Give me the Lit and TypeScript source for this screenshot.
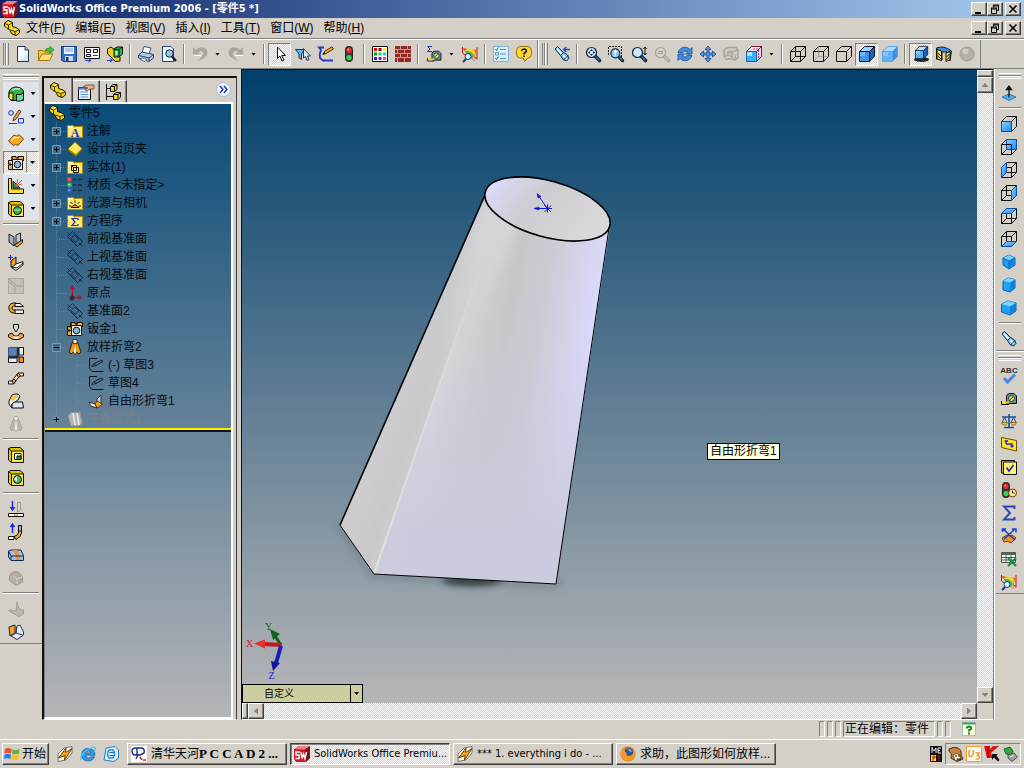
import { LitElement, html, svg, css, nothing } from "lit";
import { customElement, property } from "lit/decorators.js";
import { classMap } from "lit/directives/class-map.js";

/* ---------- icon drawings, 16 x 16 units ---------- */

const faces: Record<string, string> = {
  front: "0.5,5.5 10.5,5.5 10.5,15.5 0.5,15.5",
  back: "5.5,0.5 15.5,0.5 15.5,10.5 5.5,10.5",
  left: "0.5,5.5 5.5,0.5 5.5,10.5 0.5,15.5",
  right: "10.5,5.5 15.5,0.5 15.5,10.5 10.5,15.5",
  top: "0.5,5.5 5.5,0.5 15.5,0.5 10.5,5.5",
  bottom: "0.5,15.5 5.5,10.5 15.5,10.5 10.5,15.5",
};
const outerCube = "M.5 5.5H10.5V15.5H.5ZM.5 5.5L5.5 .5H15.5L10.5 5.5M15.5 .5V10.5L10.5 15.5";
const innerCube = "M5.5 .5V10.5H15.5M5.5 10.5L.5 15.5";
const viewCube = (f: string) => svg`
  <defs><linearGradient id="face" x1="0" y1="0" x2="1" y2="1"><stop offset="0" stop-color="#8ad4ff"/><stop offset="1" stop-color="#1f86ee"/></linearGradient></defs>
  ${f === "front" ? svg`<path d=${outerCube} stroke="#111"/>` : svg`<path d=${outerCube + innerCube} stroke="#111"/>`}
  <polygon points=${faces[f]} fill="url(#face)" stroke="#0d4fa8"/>
  ${f === "back" ? svg`<path d="M.5 5.500H10.500V15.500" stroke="#111"/>` : nothing}`;
const isoCube = (w: number) => svg`
  <path d="M8 ${1}L${8 + w} 4V11L8 15L${8 - w} 11V4Z" fill="#1f9cf0" stroke="#0a5fb8"/>
  <path d="M8 1L${8 + w} 4L8 7L${8 - w} 4Z" fill="#6ad4ff"/>
  <path d="M8 7V15L${8 + w} 11V4Z" fill="#1287e0"/>
  <path d="M${8 - w} 4L8 7L${8 + w} 4M8 7V15" fill="none" stroke="#0a64b8"/>`;
const solidCube = (c: string, top: string, side: string, line: string) => svg`
  <path d="M.5 5.500H10.500V15.500H.5Z" fill=${c}/><path d="M1 6H6V10H1Z" fill=${top} opacity=".5"/>
  <path d="M.5 5.500L5.500 .5H15.500L10.500 5.500Z" fill=${top}/>
  <path d="M10.500 5.500L15.500 .5V10.500L10.500 15.500Z" fill=${side}/><path d=${outerCube} fill="none" stroke=${line}/>`;
const lens = (inner: unknown, rim = "#123", glass = "#cfe8fb", handle = "#26609c") => svg`
  <path d="M10 10L14.500 14.500" stroke=${rim} stroke-width="3.6" stroke-linecap="round"/>
  <path d="M10.500 10.500L14.300 14.300" stroke=${handle} stroke-width="2"/>
  <circle cx="6.500" cy="6.500" r="5" fill=${glass} stroke=${rim} stroke-width="1.200"/>${inner}`;
const folder = (inner: unknown) => svg`
  <path d="M.5 2.500H6L7.500 4.500V3.500H15.500V14.500H.5Z" fill="#ffe873" stroke="#b98a00"/>
  <path d="M1 3H6L7 5H1Z" fill="#fff6b0"/>${inner}`;
const swPart = svg`
  <path d="M.5 3L4 .5L8.500 2.500V6.500L13 8L15.500 10V13L12 15.500L8 14L5.500 9.500L3 8.500L.5 6Z" fill="#f5d21c" stroke="#1a1600"/>
  <path d="M1 3.500L4.500 5L8 3M4.500 5V9M6.500 10L11 11.500L15 10M11 11.500V15" fill="none" stroke="#3a3000"/>
  <path d="M3.500 3.200L5.500 2L7 3L4.800 4Z M9 9.500L12 9.200L13 10L11 10.600Z" fill="#fff48a"/>`;
const yellowBox = (inner: unknown) => svg`
  <path d="M.5 1.500L3 .5H12L15.500 3.500V15.500H3.500L.5 13Z" fill="#e8c400" stroke="#111"/>
  <path d="M3.500 4H15.500V15.500H3.500Z" fill="#ffe94a" stroke="#111"/><path d="M.5 1.500L3.500 4" stroke="#111"/>${inner}`;
const planeGlyph = svg`<path d="M.5 5.500L5.500 .5L15.500 10.500L10.500 15.500Z" stroke="#0d1720" stroke-width=".8"/>
  <path d="M7.500 4L11.500 8L8 11.500L4 7.500ZM.5 1.500L4 5M12 12L15.500 15" stroke="#0d1720" stroke-width=".8"/>`;
const sheet = (a: string, b: string, l: string) => svg`
  <path d="M1 2L6 5V14L1 10Z" fill=${a} stroke=${l}/><path d="M8 3L12.500 1V9L8 12Z" fill="#c3cad4" stroke=${l}/>
  <path d="M8 12L14.500 7.500V10.500L9 15L6 13Z" fill=${b} stroke=${l}/>`;
const cone = (a: string, b: string, l: string) => svg`
  <path d="M5.500 3L2 13L4 15L6.500 13L8 15.500L9.500 13L12 15L14 13L10.500 3Z" fill=${b} stroke=${l}/>
  <path d="M6 4L3.500 13.500L6 12Z M10 4L12.500 13.500L10 12Z" fill=${a}/><path d="M8 5L6.800 13L8 15L9.200 13Z" fill="#f3efe2"/>
  <path d="M6 .5H10V4.500H6Z" fill="#f3efe2" stroke=${l} stroke-width=".8"/>`;
const pencilSketch = svg`<path d="M6 14.500H4L1.500 11.500V1.500H9M6 14.500H15.500" fill="none" stroke="#0c141b"/>
  <path d="M3.500 9.500L6 6.500L14 3L15 4.500L8 8.500L4 9.500M6 6.500L8 8.500" fill="none" stroke="#0c141b" stroke-width=".9"/>`;
const sheetMetal = svg`
  <path d="M.5 5.500H4V1.500H8V3H10V1.500H15.500V6M.5 5.500V9H3V10H.5V14.500H14" fill="#f3b22c" stroke="#111"/>
  <path d="M4.500 4.500H14.500V14.500H4.500Z" fill="#ececec" stroke="#111"/><circle cx="9.500" cy="9.500" r="3.300" fill="#8fb6d6" stroke="#111"/>
  <path d="M4 1.500V5M10 1.500V4M1 9.500H4" stroke="#111"/>`;
const flashlight = svg`
  <path d="M1 3L3.500 .5L9 6L13.500 9L15 12.500L12.500 15L9 13.500L6.500 9.500Z" fill="#7cc4ea" stroke="#0b2c50"/>
  <path d="M3 2.500L8 8.500M9.500 9.500L12.500 12.500" stroke="#fff" stroke-width="1.500"/><path d="M6.500 9.500L9.500 6.500M9.500 14L14 9.500" stroke="#0b2c50"/>`;
const fan = svg`
  <path d="M0 2L6 3L14 4L12 15L7 9Z" fill="#e8451e"/><path d="M3 4Q9 1 13 5L12 14L6 9Z" fill="#ffd21e"/>
  <path d="M3 6Q8 3 12 10L10 13L5 9Z" fill="#3db94c"/><path d="M5 8Q9 6 11 12L8 13Z" fill="#2da7e6"/>
  <path d="M.5 1V7L3 9M15 1V13M13 11L15 13.500" stroke="#b02010" fill="none"/>
  <circle cx="6" cy="10.500" r="3" fill="#d9f1ff" stroke="#123a6c"/><path d="M4 13L1 16" stroke="#123a6c" stroke-width="2"/>`;
const tape = svg`
  <path d="M5.500 13.500V6Q6 3.500 9 3.500H13L15.500 6V13.500Z" fill="#5d9aa8" stroke="#111"/><circle cx="10.500" cy="8.500" r="3" fill="#ffe04a" stroke="#14306a"/>
  <path d="M9 9.500L12 7" stroke="#14306a"/><path d="M.5 11V14.500H8" fill="none" stroke="#111"/><path d="M1 12.500H8" stroke="#f4d21c" stroke-width="2"/>`;
const traffic = svg`
  <rect x="4.500" y=".5" width="7" height="15" rx="3" fill="#3b3b3b" stroke="#222"/>
  <circle cx="8" cy="4.300" r="2.600" fill="#ef2c2c"/><circle cx="8" cy="11.500" r="2.600" fill="#2dd653"/><circle cx="7.200" cy="3.500" r=".8" fill="#fbb"/>`;
const winamp = svg`
  <path d="M1 8L7 2L15 .5L15 7L9 14L1 15.500Z" fill="#f4f4f0" stroke="#77756e"/>
  <path d="M1.500 12L9 2L8.500 6.500L15 2.500L7.500 14L8 9.500Z" fill="#f9a21a" stroke="#6b4200"/>`;
const swCube = svg`
  <path d="M0 3L5 0H16V12L12 16H2L0 13Z" fill="#c81e28"/><path d="M0 3L5 0H16L11 3.500Z" fill="#f08080"/><path d="M11 3.500L16 0V12L12 16Z" fill="#8a0f18"/>
  <path d="M6 6H2V9H5V12.500H1.500M7 6L8 12.500L9.500 8L11 12.500L12.500 6" fill="none" stroke="#fff" stroke-width="1.500"/>`;

const icons: Record<string, unknown> = {
  swCube,
  part: swPart,
  fan,
  tape,
  traffic,
  winamp,
  flashlight,
  sheetMetal,
  newDoc: svg`<path d="M2.500 .5H10L13.500 4V15.500H2.500Z" fill="#f4f9ff" stroke="#1c3557"/><path d="M4 15L13 8V15Z" fill="#d3e4f7"/><path d="M10 .5V4H13.500" fill="#b8cfe8" stroke="#1c3557"/>`,
  open: svg`<path d="M.5 4.500H5L6.500 6H11.500V14.500H.5Z" fill="#f7c53a" stroke="#a87304"/><path d="M.5 14.500L4 8H15L11.500 14.500Z" fill="#ffe27c" stroke="#a87304"/><path d="M7 5Q8 1.500 12 2.500V.5L16 4L12 7V5Q9 4 7 5Z" fill="#3cc93c" stroke="#0f7a1c" stroke-width=".7"/>`,
  save: svg`<path d="M.5 .5H15.500V15.500H2L.5 14Z" fill="#2f6fd0" stroke="#143a86"/><path d="M3 1H13V8H3Z" fill="#e7f0fb"/><path d="M4 3H12M4 5H12" stroke="#7f9fd0"/><path d="M4 10H12V15H4Z" fill="#cdd9ea"/><path d="M5 11H7.500V15H5Z" fill="#17386f"/>`,
  drawing: svg`<path d="M.5 1.500H15.500V12.500H.5Z" fill="#fff" stroke="#111"/><path d="M2.500 3.500H6.500V6.500H2.500ZM9.500 3.500H13.500V6.500H9.500ZM2.500 8.500H6.500V10.500H2.500Z" fill="none" stroke="#111"/><path d="M9 9.500H14M1 14.500H6M4.500 12.500L7 14.500L4.500 16" stroke="#1d3fc4" fill="none"/>`,
  asm: svg`<path d="M.5 3L4 1L8 4V9L13 11V15L8 15.500L4 11L.5 8Z" fill="#f3cf1d" stroke="#111"/><path d="M7 3L10 1H15.500V8L12 11H7Z" fill="#28b34b" stroke="#111"/><path d="M7 3.500H12V11M12 3.500L15 1" fill="none" stroke="#111"/><path d="M8.500 5H10.500V9H8.500Z" fill="#c4f4cc"/><path d="M0 14.500H5M3 12.500L5.500 14.500L3 16" stroke="#1d3fc4" fill="none"/>`,
  print: svg`<path d="M4 7L6 .5L13 2L11 8Z" fill="#fff" stroke="#2f5a92"/><path d="M.5 9L4 6L15.500 8.500V12L11 15.500L.5 12Z" fill="#b6c9de" stroke="#2b4569"/><path d="M1 9.500L11 12L15 9M11 12V15" fill="none" stroke="#2b4569"/><path d="M4 12L9 13.500L7 15.500L2.500 14Z" fill="#fff" stroke="#2b4569" stroke-width=".7"/>`,
  preview: svg`<path d="M1.500 .5H10L12.500 3V15.500H1.500Z" fill="#f2f8ff" stroke="#24456f"/><circle cx="8.500" cy="7.500" r="3.700" fill="#8ec8f0" stroke="#123"/><path d="M11 10.500L15 15" stroke="#123" stroke-width="2.500"/>`,
  undo: svg`<path d="M1 1V8.500H8.500L6 6Q11 3.500 11.200 7Q11 10.500 5.500 15Q15.500 12 15.500 6.500Q15 1.500 10 1.200Q6.500 1.200 3.800 3.800Z" fill="#a9a59c"/><path d="M2 9.500H9" stroke="#fff"/>`,
  redo: svg`<path d="M15 1V8.500H7.500L10 6Q5 3.500 4.800 7Q5 10.500 10.500 15Q.5 12 .5 6.500Q1 1.500 6 1.200Q9.500 1.200 12.200 3.800Z" fill="#a9a59c"/><path d="M7 9.500H15" stroke="#fff"/>`,
  arrow: svg`<path d="M5.500 1V12.500L8 10L10 15L12 14L9.800 9.500H13.500Z" fill="#fff" stroke="#111"/>`,
  filter: svg`<path d="M.5 3.500H9.500L6.500 8V13.500L4 12V8Z" fill="#5cb3ee" stroke="#0d3a70"/><path d="M8.500 2.500V12L10.500 10.500L12 14.500L13.800 13.800L12.500 10H15.500Z" fill="#dfe6f2" stroke="#233a66"/>`,
  sketch: svg`<path d="M6 1.500H1L3 4Q1 8 2 12L5 14.500H15" fill="none" stroke="#2637c9" stroke-width="1.800"/><path d="M5 8.500L7 5L14 .8L15.500 3L8 7.500Z" fill="#f4a52c" stroke="#5a3206"/><path d="M4.500 9L6.500 6L7.500 7.800Z" fill="#222"/>`,
  palette: svg`<path d="M.5 .5H15.500V15.500H.5Z" fill="#fff" stroke="#111"/>
    <path d="M2 2H5V5H2Z" fill="#e00"/><path d="M6.500 2H9.500V5H6.500Z" fill="#800000"/><path d="M11 2H14V5H11Z" fill="#fe0"/>
    <path d="M2 6.500H5V9.500H2Z" fill="#090"/><path d="M6.500 6.500H9.500V9.500H6.500Z" fill="#0d6"/><path d="M11 6.500H14V9.500H11Z" fill="#0cf"/>
    <path d="M2 11H5V14H2Z" fill="#22d"/><path d="M6.500 11H9.500V14H6.500Z" fill="#90c"/><path d="M11 11H14V14H11Z" fill="#f3c"/>`,
  brick: svg`<path d="M0 0H16V16H0Z" fill="#8e2a22"/><path d="M0 3.500H16M0 7.500H16M0 11.500H16M5.500 0V3M12.500 0V3M2.500 4V7M9.500 4V7M5.500 8V11M12.500 8V11M2.500 12V16M9.500 12V16" stroke="#d89a88"/>`,
  sumTape: svg`<g transform="translate(1 2) scale(.9)">${tape}</g><path d="M6 .5H1.500L4 3L1.500 5.500H6" fill="none" stroke="#1c2fc0"/>`,
  list: svg`<path d="M.5 .5H15.500V15.500H.5Z" fill="#d9edfb" stroke="#7fb2dc"/><path d="M7 3.500H13M7 8H13M7 12.500H13" stroke="#5c8fc8"/><path d="M2.500 3L3.500 4.500L5.500 1.500M2.500 12L3.500 13.500L5.500 10.500" fill="none" stroke="#168a34"/><path d="M2.500 6.500H5.500V9H2.500Z" fill="none" stroke="#5c8fc8"/>`,
  help: svg`<path d="M4 .5H12Q15.500 1 15.500 5V7.500Q15.500 11.500 12 12L8.500 15.500L7 12H4Q.5 11.500 .5 8V4.500Q.5 1 4 .5Z" fill="#ffd43a" stroke="#9c7400"/><path d="M5.500 5Q6 3 8 3Q10.500 3.200 10.300 5Q10 6.500 8 7.500V8.500M8 9.500V11" fill="none" stroke="#222" stroke-width="1.600"/>`,
  lightBack: svg`${flashlight}<path d="M16 3.500H10M12.500 1L9.500 3.500L12.500 6" fill="none" stroke="#1850c0" stroke-width="1.300"/>`,
  zoomFit: lens(svg`<path d="M6.500 3L8 5H5ZM6.500 10L8 8H5ZM3 6.500L5 5V8ZM10 6.500L8 5V8Z" fill="#123"/>`),
  zoomArea: svg`<path d="M.5 9V.5H13.500V12.500" fill="none" stroke="#222" stroke-dasharray="2 1"/><g transform="translate(1.500 1.500) scale(.9)">${lens(svg`<path d="M6.500 3V10M5 5L6.500 3L8 5" fill="none" stroke="#fff" stroke-width="1.400"/>`, "#123", "#8cc6f2")}</g>`,
  zoomInOut: svg`${lens(nothing)}<path d="M14 1V9M12.500 3L14 1L15.500 3M12.500 7L14 9L15.500 7" fill="none" stroke="#111"/>`,
  zoomSel: lens(svg`<path d="M4 5.500H9M4 7.500H9" stroke="#9c988f"/>`, "#a9a59c", "#d8d4cc", "#bdb9b0"),
  rotate: svg`<path d="M1 6.500Q3 1 8.500 1.200Q11 1.500 13 3.500L15 1.500V8H8.500L10.800 5.800Q8 3.500 5 7Z" fill="#3c8fe4" stroke="#134a94" stroke-width=".8"/><path d="M15 9.500Q13 15 7.500 14.800Q5 14.500 3 12.500L1 14.500V8H7.500L5.200 10.200Q8 12.500 11 9Z" fill="#3c8fe4" stroke="#134a94" stroke-width=".8"/>`,
  pan: svg`<path d="M8 0L11 3.500H9V7H12.500V5L16 8L12.500 11V9H9V12.500H11L8 16L5 12.500H7V9H3.500V11L0 8L3.500 5V7H7V3.500H5Z" fill="#4f9bea" stroke="#123f80" stroke-width=".8"/>`,
  grayRoll: svg`<path d="M1 4Q4 .5 9 1.500H13L15 4V12L12 14V9M1 4V11L5 9V6H9V13L12 14M5 9L9 11M9 6L15 4M2 13H8" fill="#cbc7be" stroke="#a5a198" stroke-width="1.300"/>`,
  cubeView: svg`<path d="M.5 5.500L5.500 .5H15.500L10.500 5.500Z" fill="#f7e5ee" stroke="#701838"/><path d="M10.500 5.500L15.500 .5V10.500L10.500 15.500Z" fill="#f4d4e0" stroke="#701838"/><path d="M12.500 4V12M7 3H13" stroke="#d03070" stroke-dasharray="2 1"/><path d="M.5 5.500H10.500V15.500H.5Z" fill="#3fb0f6" stroke="#0d62b4"/><path d="M1 6H6V10H1Z" fill="#a4e0ff"/>`,
  wire: svg`<path d=${outerCube + innerCube} fill="none" stroke="#111"/>`,
  hidden: svg`<path d=${outerCube} fill="none" stroke="#111"/><path d=${innerCube} fill="none" stroke="#777" stroke-dasharray="1 1"/>`,
  outline: svg`<path d=${outerCube} fill="none" stroke="#111"/>`,
  shadedEdge: solidCube("#3d97ec", "#9fd6ff", "#1d62b4", "#0a1830"),
  shaded: solidCube("#5fb0f6", "#a9dcff", "#3d8fe4", "#5aa6ee"),
  shadow: svg`<ellipse cx="8.500" cy="13.500" rx="7.500" ry="2.500" fill="#222"/><g transform="translate(2 0) scale(.82)">${solidCube("#58aef4", "#b6e0ff", "#1d62b4", "#0a1830")}</g>`,
  section: svg`<path d="M.5 2Q8 -1 15.500 5L14 15L11 12V6H6V14L.5 13Z" fill="#3c8fe0" stroke="#0b1f40"/><path d="M1 3.500L5.500 5V14.500L1 13ZM10 7L14 5.500V14L10 15.500Z" fill="#ffe02c" stroke="#111"/><path d="M1.500 7L5 10M1.500 10L5 13M10.500 11L13.500 8M10.500 14L13.500 11" stroke="#111"/>`,
  graySphere: svg`<circle cx="8" cy="8" r="7" fill="#b3afa7" stroke="#a09c94"/><circle cx="6.500" cy="5.500" r="3" fill="#cfccc5"/>`,
  /* feature bar */
  feature: svg`<path d="M1 6Q2 1.500 8 1Q14 1.500 15.500 5V14.500H3L1 12Z" fill="#35b34b" stroke="#111"/><path d="M1 7H5V14H3L1 12Z" fill="#ffe53a" stroke="#111"/><path d="M8.500 8.500H13L15.500 6.500V13L13 15H8.500Z" fill="#5fe0a0" stroke="#111"/><path d="M4 4Q8 2 12 3" stroke="#b9f3c3" fill="none" stroke-width="1.500"/>`,
  sketchTools: svg`<circle cx="3" cy="4" r="2.300" fill="none" stroke="#2433c4"/><path d="M1 14.500H9M10.500 9.500H15.500V14H10.500Z" fill="none" stroke="#2433c4"/><path d="M5 12L6 8.500L11 1L13 2.500L8 10Z" fill="#f5b13b" stroke="#5b3406"/>`,
  surface: svg`<path d="M.5 9L6 3Q9 5.500 11 2.500L15.500 7L10 13.500Q7 11 5.500 13.500Z" fill="#f7a81f" stroke="#7a4600"/><path d="M3.500 8.500L6.500 5Q9 6.500 11 5" stroke="#ffe0a0" fill="none" stroke-width="1.500"/>`,
  mold: svg`<path d="M.5 .5H3.500V11H15.500V15.500H.5Z" fill="#f6e22c" stroke="#111"/><path d="M5 10V3L12 10Z" fill="#1fa53c" stroke="#111"/><path d="M8 8L14 2M8 8L14 6M8 8L10 1" stroke="#e2552d"/>`,
  block: yellowBox(svg`<circle cx="9.500" cy="9.500" r="4" fill="#2fae4a" stroke="#111"/><path d="M6 9H13" stroke="#bff5c8"/>`),
  bendA: sheet("#9fb0c4", "#f2a128", "#222"),
  bendB: svg`<path d="M3 6L8 2V9L5 12L3 12Z" fill="#f2a128" stroke="#111"/><path d="M8 9L15 6.500V10L8 15.500L3.500 12.500Z" fill="#fff" stroke="#111"/><path d="M4 12L9 13L15 8" stroke="#111"/><path d="M2.500 0V5M0 2.500H5" stroke="#1c2fe0" stroke-width="1.200"/>`,
  grayCorner: svg`<path d="M.5 .5H15.500V15.500H.5Z" fill="#c5c1b9" stroke="#aaa69e"/><path d="M1 1L9 8H15.500M7 15V9L1 4" fill="none" stroke="#9d9991"/>`,
  hem: svg`<path d="M8 2H5Q.8 3 .8 7Q1 11.500 5 12H8V9H5.500Q3.800 8.500 4 7Q4 5.500 5.500 5H8Z" fill="#f4a823" stroke="#111"/><path d="M7 2.500H12L15.500 5.500H7ZM7 9H15.500V12.500H7Z" fill="#f6f6f6" stroke="#111"/>`,
  punch: svg`<path d="M5.500 .5H10.500V4L8 8L5.500 4Z" fill="#dcdcdc" stroke="#111"/><path d="M.5 10.500L4 9L6 12H10L12 9L15.500 10.500V13L11 15.500H5L.5 13Z" fill="#f1a62b" stroke="#111"/><path d="M5 12.500H11L9.500 15H6.500Z" fill="#fff"/>`,
  corner: svg`<path d="M.5 .5H9V9H.5Z" fill="#5e7fb2" stroke="#3b567e"/><path d="M11 .5H15.500V8H11Z" fill="#e7eef6" stroke="#111"/><path d="M.5 11H9V15.500H.5Z" fill="#e7eef6" stroke="#111"/><path d="M11 10H15.500V15.500H11Z" fill="#f48b1c" stroke="#111"/><path d="M10 0V10H0" fill="none" stroke="#111" stroke-width="1.500"/>`,
  jog: svg`<path d="M.5 14V11H4L10 3H15.500V6H11.500L5.500 14Z" fill="#f0eee8" stroke="#111"/><path d="M4 11L6 9L8 11L5.500 14ZM9 4.500L10.500 3L12.500 6L10.500 7.500Z" fill="#f2a128" stroke="#111"/>`,
  loftFlange: svg`<path d="M1 8L4 2Q10 -.5 12 3L10 7L4 11V15L1 11Z" fill="#e9eef4" stroke="#111"/><path d="M4 11Q6 8 11 9H14.500L15.500 15H4Z" fill="#dce6ef" stroke="#111"/><path d="M2 7L4.500 2.500L11 2L9 5L4 8Z" fill="#f8c444"/>`,
  grayCone: cone("#b3afa7", "#c5c1b9", "#a29e96"),
  cutBox: yellowBox(svg`<path d="M6.500 6.500H13V12.500H6.500Z" fill="#fff" stroke="#111"/><path d="M9 9H13V12.500H9Z" fill="#1f9a44" stroke="#111"/>`),
  holeBox: yellowBox(svg`<circle cx="9.500" cy="9.500" r="4" fill="#3fc25a" stroke="#111"/><path d="M9 6L6 9L9 12Z" fill="#fff"/>`),
  unfold: svg`<path d="M4.500 0V8M2.500 6L4.500 9L6.500 6" stroke="#1c2fe0" stroke-width="1.500" fill="none"/><path d="M9.500 1.500H12.500V9Q11 11 9.500 11Z" fill="#dcd8d0" stroke="#999"/><path d="M.5 12.500H15.500V15.500H.5Z" fill="#fff" stroke="#111"/><path d="M6 13H10V15H6Z" fill="#f6b541"/>`,
  foldUp: svg`<path d="M4.500 9V1M2.500 3L4.500 0L6.500 3" stroke="#1c2fe0" stroke-width="1.500" fill="none"/><path d="M10.500 1.500H13.500V9Q13 13 8 15.500L6 12.500Q10 11.500 10.500 9Z" fill="#e7b040" stroke="#111"/><path d="M10.500 1.500H13.500V7H10.500Z" fill="#9fb3c9" stroke="#111"/><path d="M.5 12.500H6V15.500H.5Z" fill="#fff" stroke="#111"/>`,
  flat: svg`<path d="M.5 4L3 3H13L15.500 9V13.500H3L.5 10Z" fill="#9fbfe4" stroke="#14284e"/><path d="M5 3H9L12 9V13H8V9Z" fill="#f0913a"/><path d="M3 9H15.500M3 13V9L.5 4" stroke="#14284e"/>`,
  grayBend: svg`<path d="M2 5Q5 0 10 2L14.500 7V12L8 15.500L1 10Z" fill="#b3afa7" stroke="#9c988f"/><path d="M5 6L9 9V14M9 9L14 7" fill="none" stroke="#d8d4cc"/>`,
  grayRip: svg`<path d="M1 9L8 10L9 1L11 8L15.500 9V13L11 15.500L1 10Z" fill="#bcb8b0" stroke="#a29e96"/>`,
  rip: svg`<path d="M1 3L7 1V9L2 12Z" fill="#f3a522" stroke="#222"/><path d="M9 2L12 1L15.500 8V11L9 15.500L3 12L8 9Z" fill="#dfe8f3" stroke="#2a3a5c"/><path d="M8 9L14.500 11M8 9L8.500 3" fill="none" stroke="#2a3a5c"/>`,
  /* view bar */
  normalTo: svg`<path d="M1 12L8 9L15 12L8 15.500Z" fill="#53b2f2" stroke="#2c76b8"/><path d="M8 12.500V2M5.500 4.500L8 1L10.500 4.500Z" fill="#111" stroke="#111" stroke-width="1.300"/>`,
  vFront: viewCube("front"),
  vBack: viewCube("back"),
  vLeft: viewCube("left"),
  vRight: viewCube("right"),
  vTop: viewCube("top"),
  vBottom: viewCube("bottom"),
  iso: isoCube(6),
  tri: svg`<path d="M2 4L7 1L14 2.500V11L9 15L2 13Z" fill="#1fa0f2" stroke="#0a5fb8"/><path d="M2 4L7 1L14 2.500L9.500 5.500Z" fill="#74d8ff"/><path d="M9.500 5.500L14 2.500V11L9 15Z" fill="#1280d8"/>`,
  dim: svg`<path d="M.5 4L7 1L15 3V11L9 15L.5 12Z" fill="#1fa0f2" stroke="#0a5fb8"/><path d="M.5 4L7 1L15 3L9 6.500Z" fill="#74d8ff"/><path d="M9 6.500L15 3V11L9 15Z" fill="#1280d8"/>`,
  abc: svg`<path d="M3 11L6.500 15L14 7.500" fill="none" stroke="#4f86e6" stroke-width="3"/><text x="8" y="6" font-size="8" text-anchor="middle" font-weight="bold" font-family="Liberation Sans" fill="#333">ABC</text>`,
  scale: svg`<path d="M8 1V14M3 14.500H13M1 4H15" stroke="#1b4f9c" stroke-width="1.600"/><path d="M3.500 4L1 10M3.500 4L6 10M12.500 4L10 10M12.500 4L15 10" stroke="#1b4f9c"/><path d="M.5 9.500H6.500L5 12H2ZM9.500 9.500H15.500L14 12H11Z" fill="#f2bf3c" stroke="#7b5600" stroke-width=".7"/>`,
  sectionProps: svg`<path d="M.5 1.500L15.500 4.500V15L.5 11.500Z" fill="#ffe12c" stroke="#665000"/><path d="M5 8V5H3.500M5 5H7M5 8H11V10.500M9.500 9.500L11 11L12.500 9.500" fill="none" stroke="#1c2fc0" stroke-width="1.300"/>`,
  check: svg`<path d="M.5 1.500H13.500V14H.5Z" fill="#e2bd18" stroke="#111"/><path d="M2.500 3H15.500V15.500H2.500Z" fill="#fff27a" stroke="#111"/><path d="M5.500 8.500L8 12L12.500 6" fill="none" stroke="#1c2fc0" stroke-width="1.700"/>`,
  trafficClock: svg`<g transform="translate(-3 0)">${traffic}</g><circle cx="11.500" cy="11" r="4" fill="#ffe98a" stroke="#5e4200"/><path d="M11.500 8.500V11H13.500" fill="none" stroke="#222"/>`,
  sigma: svg`<path d="M13.500 4V1.500H3L9 8L3 14.500H13.500V12" fill="none" stroke="#2748b4" stroke-width="1.900"/>`,
  deviation: svg`<path d="M1 10L6 7Q9 9 11 7L15 10L10 15Q7 12 3 14Z" fill="#f59224" stroke="#7a3c00"/><path d="M2 1L14 12M14 1L3 11M1.500 4V1H5M11 1H15V4.500" fill="none" stroke="#1c3fd0" stroke-width="1.500"/>`,
  sheetX: svg`<path d="M.5 1.500H14.500V11.500H.5Z" fill="#fff" stroke="#555"/><path d="M.5 1.500H14.500V4H.5Z" fill="#4a6a58"/><path d="M.5 6.500H14.500M.5 9H14.500M5 4V11M10 4V11" stroke="#555"/><path d="M7 7L15 15M15 7L7 15" stroke="#16913a" stroke-width="2.200"/>`,
  /* tree */
  tabProps: svg`<path d="M.5 3.500H12.500V15.500H.5Z" fill="#e8f4ff" stroke="#111"/><path d="M.5 3.500H12.500V5.500H.5Z" fill="#3c82d8"/><path d="M2.500 8H10M2.500 10.500H10M2.500 13H10" stroke="#4e94dc"/><path d="M5 3Q7 .5 11 1H16V5H12L8 7L7 5L10 4Z" fill="#e7b48c" stroke="#6b4024" stroke-width=".8"/>`,
  tabConfig: svg`<path d="M1.500 0V16M1.500 4.500H6M1.500 12.500H9" stroke="#111" fill="none"/><path d="M5.500 2.500L8 .5H12V5.500L9.500 7.500H5.500Z M8.500 10.500L11 8.500H15.500V13L13 15.500H8.500Z" fill="#f5d21c" stroke="#111"/><path d="M5.500 2.500H9.500V7.500M9.500 2.500L12 .5M8.500 10.500H13V15.500M13 10.500L15.500 8.500" stroke="#111"/>`,
  fNote: folder(svg`<text x="8" y="13.500" font-size="12" font-weight="bold" text-anchor="middle" font-family="Liberation Serif" fill="#1432c8">A</text>`),
  fBook: svg`<path d="M1 8L8 1L15 7.500V9L9 15.500L1 9.500Z" fill="#b89a2c" stroke="#6a5200"/><path d="M1 8L8 1L15 7.500L9 13.500Z" fill="#ffe860" stroke="#8a6c00" stroke-width=".7"/>`,
  fSolid: folder(svg`<path d="M4.500 6.500H9.500V11.500H4.500ZM6.500 8.500H11.500V13.500H6.500ZM4.500 6.500L6.500 8.500" fill="none" stroke="#111"/>`),
  material: svg`<circle cx="2.500" cy="2.500" r="2.400" fill="#f03838"/><circle cx="2.500" cy="8" r="2.400" fill="#34c848"/><circle cx="2.500" cy="13.500" r="2.400" fill="#4058f0"/><path d="M1.500 2H2.500M1.500 7.500H2.500M1.500 13H2.500" stroke="#fff"/><path d="M6 2.500H9M11 2.500H15M6 8H9M11 8H15M6 13.500H9M11 13.500H15" stroke="#23282c" stroke-width="1.300"/>`,
  fLight: folder(svg`<path d="M4 12.500Q8 7 12 12.500Z" fill="#f59a1c" stroke="#111"/><path d="M8 5.500V8M3.500 7L5.500 9M12.500 7L10.500 9M2 11L4 11M12 11H14" stroke="#111"/>`),
  fSigma: folder(svg`<path d="M11 7V5.500H5L8 9L5 12.500H11V11" fill="none" stroke="#1c2fc0" stroke-width="1.200"/>`),
  plane: planeGlyph,
  origin: svg`<path d="M5.500 13V2M3.500 4.500L5.500 1L7.500 4.500M5 12.500H14M11 10.500L14 12.500L11 14.500" fill="none" stroke="#b01432" stroke-width="1.300"/><path d="M3 11L7 15M7 11L3 15M5 10V16M2 13H8" stroke="#14141e" stroke-width=".8"/>`,
  loft: cone("#f0a020", "#e08e14", "#3a2400"),
  sketchNode: pencilSketch,
  freeBend: svg`<path d="M1 9L7 11L9 15L3 13Z" fill="#eef1f5" stroke="#333"/><path d="M9 6L13 2V10L9 14Z" fill="#c8d0da" stroke="#333"/><path d="M7 11L9 8L14.500 11L9.500 15Z" fill="#f2a128" stroke="#5a3800"/>`,
  rolled: svg`<path d="M1 5L4 1.500H13L15 12L12 15H4Z" fill="#b5b5b0" stroke="#8e9292"/><path d="M6 2L8 14M10 2L12 14" stroke="#eee" stroke-width="1.500"/>`,
  /* desktop */
  windows: svg`<path d="M1 3Q4 1 7.500 3L7 7.500Q4 6 .5 7.500Z" fill="#e8532a"/><path d="M8.500 3.500Q12 5 15.500 3L15 7.500Q12 9 8 7.800Z" fill="#5cb531"/><path d="M.5 8.500Q4 7 7 8.500L6.500 13Q3 11.500 0 13Z" fill="#2f7be0"/><path d="M8 9Q12 10.200 15 8.500L14.500 13Q11 15 7.500 13.500Z" fill="#f9c314"/>`,
  ie: svg`<path d="M15 9.200H5.800Q6 12 8.500 12Q10.200 12 11 10.800H14.500Q13 15 8 15Q1.500 14.500 1.500 8.800Q2 2.500 8 2.300Q15 2.500 15 9.200ZM5.800 7H10.800Q10.500 5 8.500 4.900Q6.200 5 5.800 7Z" fill="#2f9be8" stroke="#12599e" stroke-width=".7"/><path d="M1 14Q-1 11 5 5.500Q13 -.5 15 1.500Q16 2.500 14 5.500" fill="none" stroke="#5cc0f4" stroke-width="1.300"/>`,
  mail: svg`<path d="M3 2L12 .5L15.500 4V12L11 15.500L1 14Z" fill="#d8effc" stroke="#2a7cb8"/><path d="M6 4H10Q13 8 10 12H6Q3 8 6 4Z" fill="none" stroke="#2a8cd8" stroke-width="1.500"/><path d="M6.500 6.500H10.500M6.500 9.500H10.500" stroke="#1a62a8"/>`,
  cad: svg`<path d="M0 0H16V16H0Z" fill="#fff"/><path d="M1 5Q1 2 5 2H11Q14 3 13 7L9 9H3Q1 8 1 5ZM6 2V9M7 9L5 13" fill="none" stroke="#1a2a88" stroke-width="1.400"/><path d="M9 11L11 14M12 14H15" stroke="#d02020" stroke-width="1.500"/>`,
  firefox: svg`<circle cx="8" cy="8" r="7.500" fill="#e66a12"/><circle cx="8.500" cy="7" r="4.800" fill="#2355a8"/><path d="M1 5Q2 1 6 .5Q3.500 4 5.500 6Q7 7 6.500 9Q9 11 12 9Q14 7 13 3Q17 8 13 13Q8 17 3 13Q0 10 1 5Z" fill="#f59a1e"/><path d="M8 3Q11 3 12 6L9 5Z" fill="#8cc4ee"/>`,
  tip: svg`<path d="M1.500 1.500H14.500V14.500H1.500Z" fill="#ffffe1" stroke="#9cc4b0"/><path d="M1.500 1.500H14.500V3.500H1.500Z" fill="#3a9a78"/><path d="M5.500 7.500Q6 5.500 8 5.500Q10.500 5.700 10.300 7.500Q10 8.500 8 9.200V10.500M8 11.500V13.500" fill="none" stroke="#0b8a1c" stroke-width="2"/>`,
  ime: svg`<path d="M2 0H14V16H2Z" fill="#111"/><path d="M4 1V7M4 2L6 5L8 2V7M13 2H10V7H13M10 4.500H12" stroke="#eee" fill="none"/><path d="M3 9H8V15H3Z" fill="#ffe02c"/><path d="M5 15V10H7V12H5M9 10H12M11 10V15" stroke="#c01414" fill="none"/>`,
  fox: svg`<path d="M1 3Q6 0 10 2Q14 4 13 9L15 13L9 15.500L3 12Q5 8 1 5Z" fill="#c9803c" stroke="#4a2a10"/><path d="M5 9Q8 6 12 9L13 13L7 14.500Z" fill="#fff1dc" stroke="#4a2a10" stroke-width=".7"/><path d="M8 9V11M11 9V11M9 13H13" stroke="#111"/>`,
  u3: svg`<path d="M.5 .5H15.500V15.500H.5Z" fill="#fffaf0" stroke="#f0a030"/><path d="M3 4V9Q3 11 5 10.500Q6.500 10 7 9L7.500 4M9.500 7H13L11.500 9.500Q13.800 9.800 13.500 11.800Q12.500 13.500 9.500 13" fill="none" stroke="#f09a1e" stroke-width="1.500"/>`,
  kav: svg`<path d="M0 0H4L5 4L9 0H15L7 7L9 12H3Z" fill="#e01414"/><path d="M3 0H6L5 12H3Z" fill="#b00c0c"/><path d="M8 8H14L12.500 9.500L15.500 14L14 15.500L10 11.500L8 14Z" fill="#111"/>`,
  usb: svg`<path d="M2 3L8 1L11 5L9 9L4 8Z" fill="#2fa83c" stroke="#116a1c"/><path d="M6 9L12 7L15.500 11L10 15.500L6 12Z" fill="#9aa0a4" stroke="#4c5054"/><path d="M8 11L12 9.500" stroke="#e8e8e8"/>`,
  min: svg`<path d="M4 11H10V13H4Z" fill="#000"/>`,
  restore: svg`<path d="M6.500 4V6.500M6 4H12M6 5H12M11.500 4V9.500H10M4 7H10M4 8H10M4.500 7V12.500H9.500V7" fill="none" stroke="#000"/>`,
  close: svg`<path d="M4.500 4.500L11.500 11.500M11.500 4.500L4.500 11.500" stroke="#000" stroke-width="1.600"/>`,
};

@customElement("sw-icon")
export class SwIcon extends LitElement {
  @property() name = "";
  static styles = css`
    :host { display: block; width: 16px; height: 16px; flex: none; }
    .art { display: block; width: 16px; height: 16px; overflow: visible; }
  `;
  render() {
    return html`<svg class="art" viewBox="0 0 16 16" fill="none" aria-hidden="true">${icons[this.name] ?? nothing}</svg>`;
  }
}

type Tool = [icon: string, label: string, state?: "on" | "off"] | "|" | "v";

const standardTools: Tool[] = [
  ["newDoc", "新建"], ["open", "打开"], ["save", "保存"], ["drawing", "从零件制作工程图"], ["asm", "从零件制作装配体"], "|",
  ["print", "打印"], ["preview", "打印预览"], "|", ["undo", "撤消", "off"], "v", ["redo", "重做", "off"], "v", "|",
  ["arrow", "选择", "on"], ["filter", "选择过滤器"], ["sketch", "草图"], ["traffic", "重建模型"], "|",
  ["palette", "编辑颜色"], ["brick", "编辑纹理"], "|", ["sumTape", "测量"], "v", ["fan", "曲率"], "|", ["list", "选项"], ["help", "帮助"],
];
const viewTools: Tool[] = [
  ["lightBack", "上一视图"], "|", ["zoomFit", "整屏显示全图"], ["zoomArea", "局部放大"], ["zoomInOut", "放大或缩小"],
  ["zoomSel", "放大所选范围", "off"], ["rotate", "旋转视图"], ["pan", "平移"], ["grayRoll", "翻滚", "off"], ["cubeView", "标准视图"], "v", "|",
  ["wire", "线架图"], ["hidden", "隐藏线可见"], ["outline", "消除隐藏线"], ["shadedEdge", "带边线上色", "on"], ["shaded", "上色"], "|",
  ["shadow", "上色模式中的阴影", "on"], ["section", "剖面视图"], ["graySphere", "实景", "off"],
];
const managerTools: [string, string][] = [
  ["feature", "特征"], ["sketchTools", "草图"], ["surface", "曲面"], ["sheetMetal", "钣金"], ["mold", "模具工具"], ["block", "夹具"],
];
const sheetTools: Tool[] = [
  "|", ["bendA", "基体法兰"], ["bendB", "边线法兰"], ["grayCorner", "斜接法兰", "off"], ["hem", "褶边"], ["punch", "成形工具"],
  ["corner", "闭合角"], ["jog", "转折"], ["loftFlange", "放样折弯"], ["grayCone", "锥形", "off"], "|",
  ["cutBox", "拉伸切除"], ["holeBox", "简单直孔"], "|", ["unfold", "展开"], ["foldUp", "折叠"], ["flat", "展平"], ["grayBend", "不折弯", "off"], "|",
  ["grayRip", "切口", "off"], ["rip", "插入折弯"],
];
const orientTools: Tool[] = [
  ["normalTo", "正视于"], "|", ["vFront", "前视"], ["vBack", "后视"], ["vLeft", "左视"], ["vRight", "右视"], ["vTop", "上视"],
  ["vBottom", "下视"], ["iso", "等轴测"], ["tri", "上下二等角轴测"], ["dim", "左右二等角轴测"], "|", ["flashlight", "视图定向"],
];
const checkTools: Tool[] = [
  ["abc", "拼写检查"], ["tape", "测量"], ["scale", "质量特性"], ["sectionProps", "截面属性"], ["check", "检查"], ["trafficClock", "特征统计"],
  ["sigma", "方程式"], ["deviation", "误差分析"], ["sheetX", "系列零件设计表"], ["fan", "COSMOSXpress"],
];

interface Node { icon: string; text: string; level: number; mark?: "+" | "-"; dim?: boolean }
const tree: Node[] = [
  { icon: "part", text: "零件5", level: 0 },
  { icon: "fNote", text: "注解", level: 1, mark: "+" },
  { icon: "fBook", text: "设计活页夹", level: 1, mark: "+" },
  { icon: "fSolid", text: "实体(1)", level: 1, mark: "+" },
  { icon: "material", text: "材质 <未指定>", level: 1 },
  { icon: "fLight", text: "光源与相机", level: 1, mark: "+" },
  { icon: "fSigma", text: "方程序", level: 1, mark: "+" },
  { icon: "plane", text: "前视基准面", level: 1 },
  { icon: "plane", text: "上视基准面", level: 1 },
  { icon: "plane", text: "右视基准面", level: 1 },
  { icon: "origin", text: "原点", level: 1 },
  { icon: "plane", text: "基准面2", level: 1 },
  { icon: "sheetMetal", text: "钣金1", level: 1 },
  { icon: "loft", text: "放样折弯2", level: 1, mark: "-" },
  { icon: "sketchNode", text: "(-) 草图3", level: 2 },
  { icon: "sketchNode", text: "草图4", level: 2 },
  { icon: "freeBend", text: "自由形折弯1", level: 2 },
  { icon: "rolled", text: "平板型式1", level: 1, mark: "+", dim: true },
];

const menus: [string, string][] = [
  ["文件", "F"], ["编辑", "E"], ["视图", "V"], ["插入", "I"], ["工具", "T"], ["窗口", "W"], ["帮助", "H"],
];

@customElement("app-root")
export class AppRoot extends LitElement {
  static styles = css`
    :host {
      display: flex; flex-direction: column; height: 100vh; overflow: hidden;
      background: #d4d0c8; color: #000;
      font: 12px/16px "Liberation Sans", "Noto Sans CJK SC", sans-serif;
      --checker: repeating-conic-gradient(#fff 0 25%, #d4d0c8 0 50%) 0 0 / 2px 2px;
    }
    * { box-sizing: border-box; }
    button, select { font: inherit; color: inherit; margin: 0; padding: 0; border: 0; background: none; border-radius: 0; }
    .raised { background: #d4d0c8; border: 1px solid; border-color: #fff #404040 #404040 #fff; box-shadow: inset -1px -1px #808080; }

    .title { flex: none; display: flex; align-items: center; height: 18px; padding: 0 3px 0 2px; gap: 1px;
      background: linear-gradient(90deg, #0a246a, #a6caf0); color: #fff; }
    .title-text { flex: 1; margin: 0; font: bold 11px/16px "DejaVu Sans Condensed", "Noto Sans CJK SC", sans-serif; white-space: nowrap; }
    .win-buttons { display: flex; }
    .win-button { width: 16px; height: 14px; display: grid; place-content: center; overflow: hidden; }
    .win-button:last-child { margin-left: 2px; }

    .menu { flex: none; display: flex; align-items: center; height: 21px; padding: 0 3px 1px 4px; border-bottom: 1px solid #808080; }
    .menu-items { flex: 1; display: flex; gap: 10px; padding-left: 6px; }
    .menu-item { white-space: nowrap; }

    .tools { flex: none; display: flex; height: 30px; border-top: 1px solid #fff; border-bottom: 1px solid #808080; }
    .band { display: flex; align-items: center; padding: 0 2px 0 3px; border-right: 1px solid #808080; }
    .band + .band { border-left: 1px solid #fff; }
    .grip { width: 6px; height: 22px; margin-right: 2px; border: solid; border-width: 0 1px; border-color: #fff #808080;
      background: linear-gradient(90deg, #d4d0c8 1px, #808080 1px 2px, #fff 2px 3px, #d4d0c8 3px); }
    .grip.flat { width: auto; height: 6px; margin: 4px 3px 2px; border-width: 1px 0;
      background: linear-gradient(#d4d0c8 1px, #808080 1px 2px, #fff 2px 3px, #d4d0c8 3px); }
    .tool { width: 23px; height: 23px; display: grid; place-items: center; flex: none; border: 1px solid transparent; }
    .tool.on { background: var(--checker); border-color: #808080 #fff #fff #808080; }
    .sep { flex: none; width: 8px; height: 20px; background: linear-gradient(90deg, transparent 3px, #808080 3px 4px, #fff 4px 5px, transparent 5px); }
    .stack .sep { width: auto; height: 8px; margin: 0 3px; background: linear-gradient(transparent 3px, #808080 3px 4px, #fff 4px 5px, transparent 5px); }
    .drop { width: 13px; height: 23px; display: grid; place-items: center; }
    .caret { width: 5px; height: 3px; background: #000; clip-path: polygon(0 0, 100% 0, 50% 100%); }
    .caret.north { clip-path: polygon(50% 0, 100% 100%, 0 100%); }
    .caret.west { width: 4px; height: 7px; clip-path: polygon(100% 0, 100% 100%, 0 50%); }
    .caret.east { width: 4px; height: 7px; clip-path: polygon(0 0, 100% 50%, 0 100%); }
    .caret.soft { background: #808080; }
    .caret.wide { width: 7px; height: 4px; }

    .work { flex: 1; min-height: 0; display: grid; grid-template-columns: 42px 195px 4px minmax(0, 1fr) 31px; }
    .stack { display: flex; flex-direction: column; }
    .left-bar { align-self: start; border-bottom: 1px solid #808080; padding-top: 1px; }
    .left-bar .tool { margin-left: 4px; }
    .managers { margin: 0 3px; background: #dfe3ea; }
    .manager { display: flex; height: 23px; }
    .left-bar .manager .tool { margin-left: 1px; }
    .manager.on { background: var(--checker); border: 1px solid; border-color: #808080 #fff #fff #808080; }
    .left-bar .manager.on .tool { height: 21px; margin-left: 0; border-right-color: #808080; }
    .manager.on .drop { height: 21px; }
    .right-bar { padding-left: 2px; border-left: 1px solid #808080; box-shadow: inset 1px 0 #fff; }
    .right-bar .tool { margin-left: 1px; }
    .checks { border-top: 1px solid #808080; box-shadow: inset 0 1px #fff; border-bottom: 1px solid #808080; }

    .panel { display: flex; flex-direction: column; min-height: 0; margin-top: 7px; border: solid; border-width: 2px 1px 1px 2px; border-color: #111 #404040 #fff #111; }
    .tabs { flex: none; display: flex; align-items: end; height: 24px; background: #d4d0c8; }
    .tab { width: 27px; height: 22px; display: grid; place-items: center; border-right: 1px solid #404040; border-top: 1px solid #fff; box-shadow: inset -1px 0 #808080; }
    .tab.active { width: 29px; height: 24px; border-top: 0; }
    .more { width: 15px; height: 15px; margin: 0 5px 5px auto; border-radius: 50%; background: #eef3ff; border: 1px solid #a8b4d8; display: grid; place-items: center; }
    .tree-box { flex: 1; min-height: 0; margin-right: 3px; border: solid #fff; border-width: 2px 2px 2px 1px; border-left-color: #808080;
      background: linear-gradient(#0b4b78, #b5b5b7); }
    .tree { list-style: none; margin: 0; padding: 0; border-bottom: 2px solid #111; }
    .tree-inner { border-bottom: 2px solid #f4f000; }
    .node { display: flex; align-items: center; height: 18px; padding-left: 1px; white-space: nowrap; color: #050b10; }
    .node.root { padding-left: 4px; }
    .node.dim { color: #7d8288; }
    .node-label { margin-left: 4px; }
    .branch { flex: none; width: 20px; height: 18px; margin-right: 1px; }

    .view { display: grid; grid-template-columns: minmax(0, 1fr) 16px; grid-template-rows: minmax(0, 1fr) 16px; border: solid; border-width: 1px 0 1px 1px; border-color: #111 #111 #fff #111; }
    .canvas { position: relative; background: linear-gradient(#003f6c, #b6b6b7); overflow: hidden; }
    .scene { display: block; width: 100%; height: 100%; }
    .tooltip { position: absolute; left: 465px; top: 373px; padding: 0 2px; height: 17px; line-height: 15px; border: 1px solid #000; background: #ffffe1; white-space: nowrap; }
    .config { position: absolute; left: 0; bottom: 0; width: 121px; height: 19px; display: flex; align-items: center; border: 1px solid #000; background: #cccea0; }
    .config-select { appearance: none; flex: 1; height: 17px; padding-left: 21px; font-size: 10px; border-right: 1px solid #000; }
    .config .caret { margin: 0 3px; }
    .scroll { display: flex; background: var(--checker); }
    .scroll.v { flex-direction: column; }
    .arrow { width: 16px; height: 16px; flex: none; display: grid; place-items: center; }
    .split { flex: none; }
    .scroll.v .split { height: 7px; }
    .scroll.h .split { width: 6px; }
    .push { flex: 1; }

    .status { flex: none; display: flex; align-items: center; justify-content: flex-end; height: 21px; padding-right: 47px; gap: 2px; }
    .cell { width: 6px; height: 16px; border: 1px solid; border-color: #808080 #fff #fff #808080; }
    .cell.text { width: 92px; padding-left: 1px; line-height: 14px; white-space: nowrap; }
    .tip { margin-left: 8px; }

    .taskbar { flex: none; display: flex; align-items: center; height: 29px; padding: 2px 3px 3px 2px; border-top: 1px solid #fff; gap: 3px;
      font-family: "DejaVu Sans Condensed", "Noto Sans CJK SC", sans-serif; font-size: 11px; }
    .start { width: 47px; height: 22px; display: flex; align-items: center; gap: 2px; padding-left: 1px; font-size: 12px; white-space: nowrap; }
    .quick { display: flex; gap: 7px; padding: 0 5px; }
    .task { flex: 0 1 160px; min-width: 0; height: 22px; display: flex; align-items: center; gap: 4px; padding: 0 3px; text-align: left; }
    .task.on { background: var(--checker); border-color: #404040 #fff #fff #404040; box-shadow: inset 1px 1px #808080; }
    .task-text { min-width: 0; white-space: nowrap; overflow: hidden; }
    .task-text.cjk { font-size: 12px; }
    .serif { font-family: "Liberation Serif", serif; font-weight: bold; font-size: 13px; }
    .tray { margin-left: auto; display: flex; align-items: center; gap: 1px; }
    .tray-box { display: flex; gap: 2px; padding: 2px; height: 22px; align-items: center; border: 1px solid; border-color: #808080 #fff #fff #808080; }
  `;

  private tools(list: Tool[]) {
    return list.map((t) =>
      t === "|" ? html`<span class="sep"></span>`
      : t === "v" ? html`<button class="drop" aria-label="更多"><span class="caret"></span></button>`
      : html`<button class=${classMap({ tool: true, on: t[2] === "on" })} aria-label=${t[1]} ?disabled=${t[2] === "off"}><sw-icon name=${t[0]}></sw-icon></button>`);
  }

  private winButtons() {
    return html`<div class="win-buttons">
      ${[["min", "最小化"], ["restore", "还原"], ["close", "关闭"]].map(([i, l]) => html`<button class="win-button raised" aria-label=${l}><sw-icon name=${i}></sw-icon></button>`)}
    </div>`;
  }

  private branch(n: Node, index: number) {
    const last = index === tree.length - 1;
    const line = "#8ba6b6";
    return html`<svg class="branch" viewBox="0 0 20 18" aria-hidden="true">
      <path d=${`M10.5 0V${last ? 9 : 18}${n.level === 1 ? "M11 9.500H20" : ""}`} stroke=${line} stroke-dasharray="1 1" fill="none" opacity=".5"/>
      ${n.mark ? svg`<path d="M6.500 5.500H14.500V13.500H6.500Z" fill=${last ? "#68869a" : "#3b6b8a"} stroke=${last ? "none" : "#7f9aab"}/>
        <path d=${n.mark === "+" ? "M8 9.500H13M10.500 7V12" : "M8 9.500H13"} stroke="#000"/>` : nothing}
    </svg>
    ${n.level === 2 ? html`<svg class="branch" viewBox="0 0 20 18" aria-hidden="true"><path d="M9.500 0V18M10 9.500H19" stroke=${line} stroke-dasharray="1 1" opacity=".3"/></svg>` : nothing}`;
  }

  private node(n: Node, index: number) {
    return html`<div class=${classMap({ node: true, root: n.level === 0, dim: !!n.dim })} role="treeitem">
      ${n.level ? this.branch(n, index) : nothing}
      <sw-icon name=${n.icon}></sw-icon><span class="node-label">${n.text}</span>
    </div>`;
  }

  private scene() {
    return svg`
      <defs>
        <linearGradient id="skin" gradientUnits="userSpaceOnUse" x1="440" y1="350" x2="594" y2="374">
          <stop offset="0" stop-color="#dadadd"/><stop offset=".12" stop-color="#d2d2d5"/><stop offset=".4" stop-color="#c7c7ca"/><stop offset=".6" stop-color="#cbcbd4"/>
          <stop offset=".86" stop-color="#d6d6f2"/><stop offset="1" stop-color="#dcdcff"/>
        </linearGradient>
        <linearGradient id="side" gradientUnits="userSpaceOnUse" x1="400" y1="390" x2="440" y2="404">
          <stop offset="0" stop-color="#cdcdd0"/><stop offset=".6" stop-color="#c8c8cb"/><stop offset="1" stop-color="#d0d0d3"/>
        </linearGradient>
        <linearGradient id="low" x1="0" y1="0" x2="0" y2="1">
          <stop offset=".3" stop-color="#cbcbde" stop-opacity="0"/><stop offset=".85" stop-color="#cbcbde" stop-opacity=".95"/>
        </linearGradient>
        <linearGradient id="blend" gradientUnits="userSpaceOnUse" x1="0" y1="220" x2="0" y2="400">
          <stop offset="0" stop-color="#d6d6d9"/><stop offset="1" stop-color="#d6d6d9" stop-opacity="0"/>
        </linearGradient>
        <linearGradient id="ridge" gradientUnits="userSpaceOnUse" x1="374" y1="574" x2="490" y2="240">
          <stop offset="0" stop-color="#e0e0e0"/><stop offset=".6" stop-color="#dcdcde"/><stop offset="1" stop-color="#dcdcde" stop-opacity="0"/>
        </linearGradient>
        <linearGradient id="mouth" x1="0" y1="0" x2="1" y2=".2">
          <stop offset="0" stop-color="#e2e2ff"/><stop offset=".2" stop-color="#d6d6ee"/><stop offset=".45" stop-color="#cdcdd1"/><stop offset="1" stop-color="#d9d9da"/>
        </linearGradient>
        <filter id="soft" x="-30%" y="-60%" width="160%" height="220%"><feGaussianBlur stdDeviation="3"/></filter>
        <filter id="melt" x="-50%" y="-20%" width="200%" height="140%"><feGaussianBlur stdDeviation="5"/></filter>
        <clipPath id="body"><path d="M485 195L340 525L374 574L556 584L610 226Z"/></clipPath>
      </defs>
      <ellipse cx="472" cy="580" rx="30" ry="6" fill="#29343a" filter="url(#soft)"/>
      <path d="M338 524L372 576L556 586L562 580" fill="none" stroke="#5b666d" stroke-width="4" opacity=".5" filter="url(#soft)"/>
      <path d="M485 195L340 525L374 574L556 584L610 226Z" fill="url(#skin)"/>
      <path d="M485 195L340 525L374 574L500 215Z" fill="url(#side)"/>
      <path d="M374 574L556 584L610 226L500 215Z" fill="url(#low)"/>
      <g clip-path="url(#body)"><path d="M484 200L420 400L450 400L520 220Z" fill="url(#blend)" filter="url(#melt)"/></g>
      <path d="M374 574L434 400L490 240" fill="none" stroke="url(#ridge)" stroke-width="2"/>
      <path d="M485 195L340 525" stroke="#000" stroke-width="1.600" fill="none"/>
      <path d="M340 525L374 574L556 584L609 228" fill="none" stroke="#000"/>
      <ellipse cx="547.500" cy="209" rx="64.500" ry="28" transform="rotate(15.500 547.500 209)" fill="url(#mouth)" stroke="#000" stroke-width="1.600"/>
      <g stroke="#1414d8" fill="#1414d8">
        <path d="M548 208.500H535M547 208L538 195M544.500 205.500L551 212M551 205.500L544.500 212M547.500 204.500V212.500M543 208.500H552" fill="none"/>
        <path d="M534 208.500L539 207V210ZM537 193.500L541 196.500L538 198Z" stroke-width=".6"/>
      </g>
      <path d="M281 645L275 636" stroke="#14601c" stroke-width="3"/><path d="M270 629L280 634L273 640Z" fill="#14601c"/>
      <path d="M282 645L264 644" stroke="#c01c1c" stroke-width="4"/><path d="M254 643.500L265 639.500V648.500Z" fill="#e03030"/>
      <path d="M281 646L276 663" stroke="#1c1cb8" stroke-width="4"/><path d="M273 671L271 661L280 663Z" fill="#14149c"/>
      <g font-family="Liberation Serif" font-size="10" text-anchor="middle">
        <text x="249.500" y="647" fill="#d01c38">X</text><text x="268.500" y="630" fill="#14601c">Y</text><text x="271.500" y="679" fill="#1c1cd0">Z</text>
      </g>`;
  }

  render() {
    return html`
      <header class="title">
        <sw-icon name="swCube"></sw-icon>
        <h1 class="title-text">SolidWorks Office Premium 2006 - [零件5 *]</h1>
        ${this.winButtons()}
      </header>
      <nav class="menu">
        <sw-icon name="part"></sw-icon>
        <div class="menu-items">${menus.map(([t, k]) => html`<button class="menu-item">${t}(<u>${k}</u>)</button>`)}</div>
        ${this.winButtons()}
      </nav>
      <div class="tools">
        <div class="band"><span class="grip"></span>${this.tools(standardTools)}</div>
        <div class="band"><span class="grip"></span>${this.tools(viewTools)}</div>
      </div>
      <main class="work">
        <div class="stack left-bar">
          <span class="grip flat"></span>
          <div class="managers">
            ${managerTools.map(([i, l], n) => html`<div class=${classMap({ manager: true, on: n === 3 })}>
              <button class="tool" aria-label=${l}><sw-icon name=${i}></sw-icon></button>
              <button class="drop" aria-label="${l}菜单"><span class="caret"></span></button>
            </div>`)}
          </div>
          ${this.tools(sheetTools)}
        </div>
        <section class="panel">
          <div class="tabs">
            <button class="tab active" aria-label="特征管理器"><sw-icon name="part"></sw-icon></button>
            <button class="tab" aria-label="属性管理器"><sw-icon name="tabProps"></sw-icon></button>
            <button class="tab" aria-label="配置管理器"><sw-icon name="tabConfig"></sw-icon></button>
            <button class="more" aria-label="展开">
              <svg width="9" height="9" viewBox="0 0 9 9"><path d="M1 1L4 4.500L1 8M5 1L8 4.500L5 8" fill="none" stroke="#1c3a9c" stroke-width="1.400"/></svg>
            </button>
          </div>
          <div class="tree-box">
            <div class="tree" role="tree"><div class="tree-inner">${tree.map((n, i) => this.node(n, i))}</div></div>
          </div>
        </section>
        <span></span>
        <section class="view">
          <div class="canvas">
            <svg class="scene" viewBox="242 70 735 633" role="img" aria-label="放样钣金零件">${this.scene()}</svg>
            <div class="tooltip" role="tooltip">自由形折弯1</div>
            <div class="config">
              <select class="config-select" aria-label="视图设定"><option>自定义</option></select>
              <span class="caret"></span>
            </div>
          </div>
          <div class="scroll v">
            <span class="split raised"></span>
            <button class="arrow raised" aria-label="向上"><span class="caret north wide soft"></span></button>
            <span class="push"></span>
            <button class="arrow raised" aria-label="向下"><span class="caret wide soft"></span></button>
          </div>
          <div class="scroll h">
            <span class="split raised"></span>
            <button class="arrow raised" aria-label="向左"><span class="caret west soft"></span></button>
            <span class="push"></span>
            <button class="arrow raised" aria-label="向右"><span class="caret east soft"></span></button>
          </div>
          <span></span>
        </section>
        <div class="stack right-bar">
          <span class="grip flat"></span>
          ${this.tools(orientTools)}
          <div class="stack checks"><span class="grip flat"></span>${this.tools(checkTools)}</div>
        </div>
      </main>
      <footer class="status">
        <span class="cell"></span><span class="cell"></span><span class="cell"></span>
        <span class="cell text">正在编辑：零件</span>
        <span class="cell"></span><span class="cell"></span>
        <sw-icon class="tip" name="tip"></sw-icon>
      </footer>
      <div class="taskbar">
        <button class="start raised"><sw-icon name="windows"></sw-icon>开始</button>
        <div class="quick"><sw-icon name="winamp"></sw-icon><sw-icon name="ie"></sw-icon><sw-icon name="mail"></sw-icon></div>
        <button class="task raised"><sw-icon name="cad"></sw-icon><span class="task-text cjk">清华天河<span class="serif">P C C A D 2 ...</span></span></button>
        <button class="task raised on"><sw-icon name="swCube"></sw-icon><span class="task-text">SolidWorks Office Premiu...</span></button>
        <button class="task raised"><sw-icon name="winamp"></sw-icon><span class="task-text">*** 1. everything i do - ...</span></button>
        <button class="task raised"><sw-icon name="firefox"></sw-icon><span class="task-text cjk">求助，此图形如何放样...</span></button>
        <div class="tray">
          <sw-icon name="ime"></sw-icon>
          <div class="tray-box"><sw-icon name="fox"></sw-icon><sw-icon name="u3"></sw-icon><sw-icon name="kav"></sw-icon><sw-icon name="usb"></sw-icon></div>
        </div>
      </div>`;
  }
}
